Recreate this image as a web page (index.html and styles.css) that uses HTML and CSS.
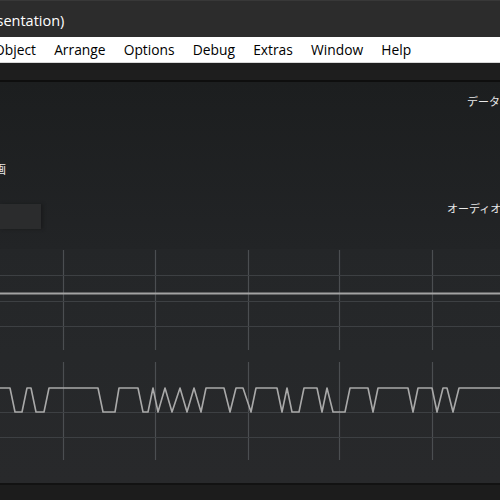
FILE: index.html
```html
<!DOCTYPE html>
<html lang="ja">
<head>
<meta charset="utf-8">
<title>Presentation</title>
<link rel="stylesheet" href="styles.css">
</head>
<body>
<div class="window">
  <header class="titlebar"><span class="title">sentation)</span></header>
  <nav class="menubar">
    <span class="menu first">Object</span>
    <span class="menu">Arrange</span>
    <span class="menu">Options</span>
    <span class="menu">Debug</span>
    <span class="menu">Extras</span>
    <span class="menu">Window</span>
    <span class="menu">Help</span>
  </nav>
  <div class="toolbar"></div>
  <section class="panel">
    <div class="left">
      <span class="label cut">画</span>
      <div class="field"></div>
    </div>
    <div class="right">
      <span class="label data">データベース</span>
      <span class="label audio">オーディオ出力</span>
    </div>
  </section>
  <section class="chart">
    <svg class="plot" width="500" height="234" viewBox="0 249 500 234">
      <g class="vgrid">
        <line x1="63.5" y1="250" x2="63.5" y2="350"/>
        <line x1="155.5" y1="250" x2="155.5" y2="350"/>
        <line x1="248.5" y1="250" x2="248.5" y2="350"/>
        <line x1="339.5" y1="250" x2="339.5" y2="350"/>
        <line x1="432.5" y1="250" x2="432.5" y2="350"/>
        <line x1="63.5" y1="362" x2="63.5" y2="460"/>
        <line x1="155.5" y1="362" x2="155.5" y2="460"/>
        <line x1="248.5" y1="362" x2="248.5" y2="460"/>
        <line x1="339.5" y1="362" x2="339.5" y2="460"/>
        <line x1="432.5" y1="362" x2="432.5" y2="460"/>
      </g>
      <g class="hgrid">
        <line x1="0" y1="275.5" x2="500" y2="275.5"/>
        <line x1="0" y1="301.5" x2="500" y2="301.5"/>
        <line x1="0" y1="326.5" x2="500" y2="326.5"/>
        <line x1="0" y1="412.5" x2="500" y2="412.5"/>
        <line x1="0" y1="437.5" x2="500" y2="437.5"/>
      </g>
      <line class="level" x1="0" y1="293.5" x2="500" y2="293.5"/>
      <polyline class="wave" points="0,388 10,388 15,412 22,412 27,388 31,388 36,412 44,412 49,388 98,388 103,412 115,412 119,388 138,388 143,412 148,412 153,388 158,412 165,388 172,412 180,388 187,412 194,388 201,412 206,388 224,388 230,412 236,388 243,388 251,412 256,388 277,388 282,412 287,388 292,412 299,412 304,388 317,388 322,412 327,388 333,412 345,412 350,388 368,388 373,412 378,388 408,388 413,412 418,388 432,388 437,412 443,388 447,388 453,412 459,388 500,388"/>
    </svg>
  </section>
  <footer class="statusbar"></footer>
</div>
</body>
</html>
```

FILE: styles.css
```css
* { box-sizing: border-box; }
html, body {
  margin: 0;
  padding: 0;
  width: 500px;
  height: 500px;
  overflow: hidden;
  background: #1c1d1e;
}
.window {
  width: 500px;
  height: 500px;
  display: flex;
  flex-direction: column;
  font-family: "Open Sans", "Noto Sans", "Noto Sans CJK JP", sans-serif;
}
.titlebar {
  height: 37px;
  flex: none;
  background: #2c2c2c;
  border-top: 1px solid #383838;
  display: flex;
  align-items: center;
  overflow: hidden;
}
.title {
  color: #ffffff;
  font-size: 14.5px;
  margin-left: -3.5px;
  margin-top: 2px;
  white-space: nowrap;
}
.menubar {
  height: 26px;
  flex: none;
  background: #ffffff;
  border-bottom: 1px solid #d8d8d8;
  display: flex;
  align-items: center;
  gap: 18.2px;
  overflow: hidden;
  white-space: nowrap;
}
.menu {
  color: #000000;
  font-size: 13.8px;
  flex: none;
}
.menu.first { margin-left: -6px; }
.toolbar {
  height: 19px;
  flex: none;
  background: #1e1e1e;
  border-bottom: 2px solid #0e0e0e;
}
.panel {
  height: 167px;
  flex: none;
  background: linear-gradient(#1c1e1f, #222426);
  display: flex;
  justify-content: space-between;
}
.left {
  width: 60px;
  display: flex;
  flex-direction: column;
  padding-top: 80px;
  overflow: hidden;
}
.right {
  width: 54px;
  display: flex;
  flex-direction: column;
  padding-top: 12px;
  overflow: hidden;
}
.label {
  color: #e8e8e8;
  font-family: "Noto Sans CJK JP", sans-serif;
  font-size: 11px;
  line-height: 14px;
  height: 14px;
  white-space: nowrap;
}
.cut { margin-left: -6px; font-size: 12px; }
.field {
  margin-top: 28px;
  width: 41px;
  height: 25px;
  background: #2b2c2d;
  box-shadow: 2px 0 3px #1a1b1c;
}
.data { padding-left: 21px; }
.audio { margin-top: 93px; padding-left: 1px; }
.chart {
  height: 234px;
  flex: none;
  background: linear-gradient(#242628, #26282a 45%, #28292b);
}
.plot { display: block; }
.vgrid line { stroke: #4b4e51; stroke-width: 1.2; }
.hgrid line { stroke: #3d4043; stroke-width: 1; }
.level { stroke: #a3a3a3; stroke-width: 2; }
.wave {
  fill: none;
  stroke: #a9a9a9;
  stroke-width: 1.6;
  stroke-linejoin: round;
}
.statusbar {
  flex: 1;
  background: #1c1c1c;
  border-top: 2px solid #121212;
}
```
